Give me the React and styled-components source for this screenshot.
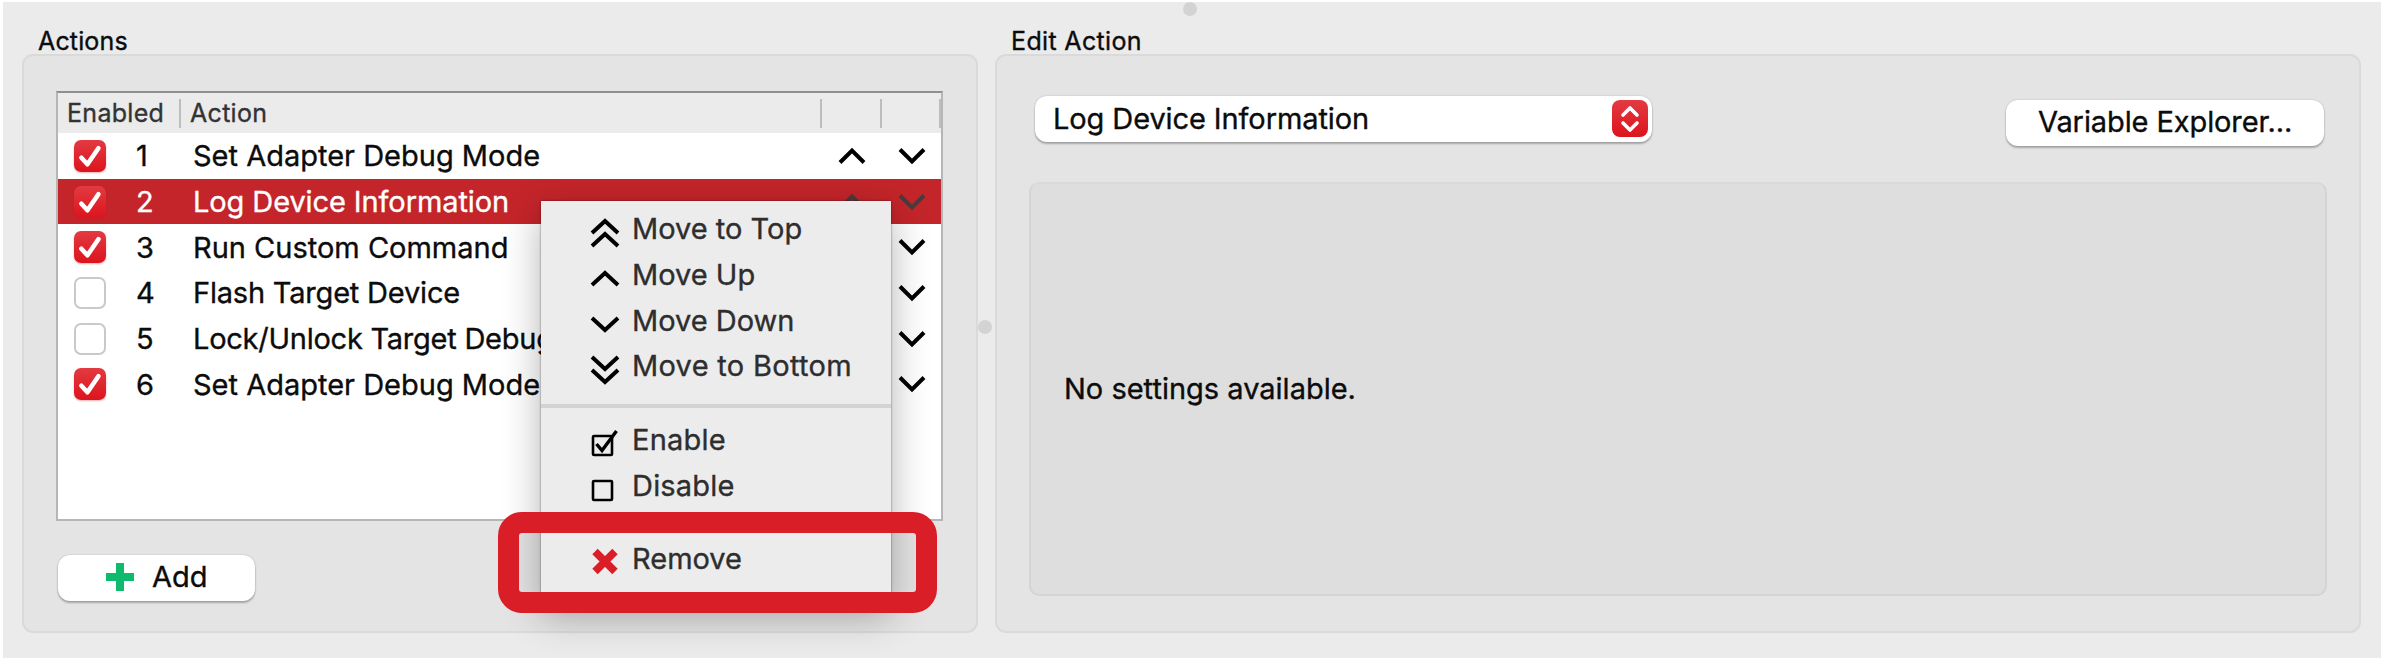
import { useState } from 'react';
import styled, { createGlobalStyle } from 'styled-components';

const GlobalStyle = createGlobalStyle`
    * { box-sizing: border-box; }
    body {
        margin: 0;
        background: #fff;
        font-family: Inter, "Liberation Sans", sans-serif;
        color: #0c0c0c;
        -webkit-text-stroke: 0.35px currentColor;
    }
`;

const Window = styled.div`
    position: relative;
    display: flex;
    align-items: flex-start;
    width: 2378px;
    height: 656px;
    margin: 2px 2px 2px 3px;
    padding: 10px 20px 0 19px;
    background: #ebebeb;
`;

const Group = styled.section`
    display: flex;
    flex-direction: column;
    width: ${props => props.$width}px;
`;

const GroupTitle = styled.h2`
    margin: 0;
    padding-left: 16px;
    height: 42px;
    font-size: 25px;
    font-weight: 400;
    line-height: 58px;
    letter-spacing: ${props => props.$spacing || 0}px;
    white-space: nowrap;
`;

const GroupBox = styled.div`
    display: flex;
    flex-direction: column;
    height: 579px;
    padding: ${props => props.$padding};
    background: #e4e4e4;
    border: 2px solid #dadada;
    border-radius: 11px;
`;

const Splitter = styled.div`
    display: flex;
    justify-content: center;
    align-items: center;
    width: 17px;
    height: 629px;
    padding-right: 3px;
`;

const Grip = styled.i`
    flex: none;
    width: 14px;
    height: 14px;
    border-radius: 50%;
    background: #d3d3d3;
`;

const TopGrip = styled(Grip)`
    position: absolute;
    top: 0;
    left: 1180px;
`;

const Table = styled.div`
    width: 887px;
    height: 430px;
    background: #fff;
    border: 2px solid #b6b6b6;
    border-top-color: #8f8f8f;
`;

const TableHead = styled.div`
    display: grid;
    grid-template-columns: 123px 641px 60px 59px;
    align-items: center;
    height: 40px;
    background: #ebebeb;
`;

const HeadCell = styled.div`
    height: 29px;
    padding-left: 9px;
    border-right: 2px solid #bdbdbd;
    font-size: 25px;
    line-height: 29px;
    letter-spacing: 0.3px;
    color: #333;
`;

const Row = styled.div`
    display: grid;
    grid-template-columns: 78px 57px 629px 60px 59px;
    align-items: center;
    height: 45.7px;
    font-size: 29px;
    white-space: nowrap;
    color: ${props => props.$selected ? '#fff' : '#0c0c0c'};
    background: ${props => props.$selected ? '#c4252a' : 'transparent'};
`;

const RowText = styled.span`
    letter-spacing: ${props => props.$spacing || 0}px;
`;

const ArrowCell = styled.span`
    display: flex;
    justify-content: center;
    color: ${props => props.$dim ? '#4a3c3d' : '#000'};
`;

const Check = styled.span`
    display: flex;
    align-items: center;
    justify-content: center;
    width: 32px;
    height: 32px;
    margin-left: 16px;
    border-radius: 7px;
    border: ${props => props.$on ? '0' : '2px solid #c9c9c9'};
    background: ${props => props.$on ? 'linear-gradient(#e33a42, #dc141d)' : '#fff'};
    box-shadow: ${props => props.$on ? '0 1px 2px rgba(200, 20, 30, 0.35)' : 'none'};
`;

const PushButton = styled.button`
    display: flex;
    align-items: center;
    height: 46px;
    width: ${props => props.$width}px;
    padding: 0 0 1px ${props => props.$inset}px;
    border: 0;
    border-radius: 12px;
    background: #fff;
    box-shadow: 0 2px 2px rgba(0, 0, 0, 0.26), 0 0 2px rgba(0, 0, 0, 0.2);
    font: 400 29px Inter, "Liberation Sans", sans-serif;
    letter-spacing: ${props => props.$spacing || 0}px;
    color: #0c0c0c;
    white-space: nowrap;
`;

const AddButton = styled(PushButton)`
    gap: 17px;
    margin: 34px 0 0 2px;
    padding-bottom: 3px;
`;

const Toolbar = styled.div`
    display: flex;
    justify-content: space-between;
    align-items: flex-start;
    padding: 0 3px 0 6px;
`;

const ExplorerButton = styled(PushButton)`
    margin-top: 4px;
    padding-bottom: 3px;
`;

const Select = styled(PushButton)`
    justify-content: space-between;
    padding-right: 4px;
`;

const SelectArrows = styled.span`
    display: flex;
    align-items: center;
    justify-content: center;
    width: 36px;
    height: 37px;
    border-radius: 8px;
    background: linear-gradient(#e33a42, #dc141d);
`;

const Settings = styled.div`
    display: flex;
    align-items: center;
    width: 1298px;
    height: 414px;
    margin-top: 36px;
    padding: 0 0 1px 33px;
    border: 2px solid #d4d4d4;
    border-top-color: #d9d9d9;
    border-radius: 10px;
    background: #dedede;
    font-size: 29px;
`;

const Menu = styled.div`
    position: absolute;
    left: 538px;
    top: 199px;
    width: 350px;
    height: 402px;
    padding-top: 5px;
    background: #ececec;
    box-shadow: 0 0 2px rgba(0, 0, 0, 0.5), 0 12px 36px rgba(0, 0, 0, 0.3);
`;

const MenuItem = styled.div`
    display: flex;
    align-items: center;
    height: 45.7px;
    padding-left: 49px;
    font-size: 29px;
    color: #2e2e2e;
    white-space: nowrap;
`;

const MenuIcon = styled.svg`
    flex: none;
    margin: 8px 12px 0 0;
    overflow: visible;
`;

const MenuLabel = styled.span`
    letter-spacing: ${props => props.$spacing || 0}px;
`;

const MenuLine = styled.div`
    height: 4px;
    margin: 15px 0 9px;
    background: #d3d3d3;
`;

const Highlight = styled.div`
    position: absolute;
    left: 495px;
    top: 510px;
    width: 439px;
    height: 101px;
    border: 21px solid #d91e28;
    border-radius: 24px;
`;

const Chevron = ({ up }) => (
    <svg width="28" height="18" viewBox="0 0 28 18" fill="none" stroke="currentColor" strokeWidth="4">
        <path d={up ? 'M2 15.5 14 3.5 26 15.5' : 'M2 2.5 14 14.5 26 2.5'} />
    </svg>
);

const Tick = () => (
    <svg width="24" height="26" viewBox="0 0 24 26" fill="none" stroke="#fff" strokeWidth="4.6" strokeLinecap="round" strokeLinejoin="round">
        <path d="M3.4 14.8 9.4 21.2 20.4 5.2" />
    </svg>
);

const icons = {
    top: <path d="M2 16 15 4 28 16M2 29 15 17 28 29" />,
    up: <path d="M2 22 15 10 28 22" />,
    down: <path d="M2 10 15 22 28 10" />,
    bottom: <path d="M2 3 15 15 28 3M2 16 15 28 28 16" />,
    enable: <><rect x="3" y="8" width="19" height="19" rx="1" strokeWidth="2.6" /><path d="M6.5 16 12 22.5 26.5 3" strokeWidth="3.4" /></>,
    disable: <rect x="3" y="8" width="19" height="19" rx="1" strokeWidth="2.6" />,
    remove: <path d="M5 4.5 25 24.5M25 4.5 5 24.5" stroke="#d91e28" strokeWidth="7.6" />,
};

const actions = [
    { id: 1, name: 'Set Adapter Debug Mode', enabled: true },
    { id: 2, name: 'Log Device Information', enabled: true, spacing: -0.1 },
    { id: 3, name: 'Run Custom Command', enabled: true },
    { id: 4, name: 'Flash Target Device', enabled: false, spacing: -0.2 },
    { id: 5, name: 'Lock/Unlock Target Debug', enabled: false, spacing: -0.25 },
    { id: 6, name: 'Set Adapter Debug Mode', enabled: true },
];

const menu = [
    { icon: 'top', label: 'Move to Top' },
    { icon: 'up', label: 'Move Up' },
    { icon: 'down', label: 'Move Down' },
    { icon: 'bottom', label: 'Move to Bottom', spacing: 0.3 },
    { line: true },
    { icon: 'enable', label: 'Enable', spacing: 0.2 },
    { icon: 'disable', label: 'Disable', spacing: 0.2 },
    { line: true },
    { icon: 'remove', label: 'Remove' },
];

const App = () => {
    const [selected, setSelected] = useState(2);

    return (
        <>
            <GlobalStyle />
            <Window>
                <TopGrip />
                <Group $width={956}>
                    <GroupTitle $spacing={0.15}>Actions</GroupTitle>
                    <GroupBox $padding="35px 0 0 32px">
                        <Table>
                            <TableHead>
                                <HeadCell>Enabled</HeadCell>
                                <HeadCell>Action</HeadCell>
                                <HeadCell />
                                <HeadCell />
                            </TableHead>
                            {actions.map(each => (
                                <Row key={each.id} $selected={each.id === selected} onClick={() => setSelected(each.id)}>
                                    <Check $on={each.enabled}>{each.enabled && <Tick />}</Check>
                                    <span>{each.id}</span>
                                    <RowText $spacing={each.spacing}>{each.name}</RowText>
                                    <ArrowCell $dim={each.id === selected}><Chevron up /></ArrowCell>
                                    <ArrowCell $dim={each.id === selected}><Chevron /></ArrowCell>
                                </Row>
                            ))}
                        </Table>
                        <AddButton type="button" $width={197} $inset={47}>
                            <svg width="30" height="30" viewBox="0 0 30 30" stroke="#0fb96d" strokeWidth="8">
                                <path d="M15 1V29M1 15H29" />
                            </svg>
                            Add
                        </AddButton>
                    </GroupBox>
                </Group>
                <Splitter><Grip /></Splitter>
                <Group $width={1366}>
                    <GroupTitle $spacing={0.35}>Edit Action</GroupTitle>
                    <GroupBox $padding="40px 32px 0 32px">
                        <Toolbar>
                            <Select type="button" $width={617} $inset={18} $spacing={-0.1}>
                                Log Device Information
                                <SelectArrows>
                                    <svg width="20" height="30" viewBox="0 0 20 30" fill="none" stroke="#fff" strokeWidth="3.6" strokeLinecap="round" strokeLinejoin="round">
                                        <path d="M3 11 10 4 17 11M3 19 10 26 17 19" />
                                    </svg>
                                </SelectArrows>
                            </Select>
                            <ExplorerButton type="button" $width={318} $inset={32} $spacing={-0.1}>Variable Explorer...</ExplorerButton>
                        </Toolbar>
                        <Settings>No settings available.</Settings>
                    </GroupBox>
                </Group>
                <Menu>
                    {menu.map((each, i) => each.line ? <MenuLine key={i} /> : (
                        <MenuItem key={i}>
                            <MenuIcon width="30" height="32" viewBox="0 0 30 32" fill="none" stroke="#000" strokeWidth="4">
                                {icons[each.icon]}
                            </MenuIcon>
                            <MenuLabel $spacing={each.spacing}>{each.label}</MenuLabel>
                        </MenuItem>
                    ))}
                </Menu>
                <Highlight />
            </Window>
        </>
    )
}

export default App
